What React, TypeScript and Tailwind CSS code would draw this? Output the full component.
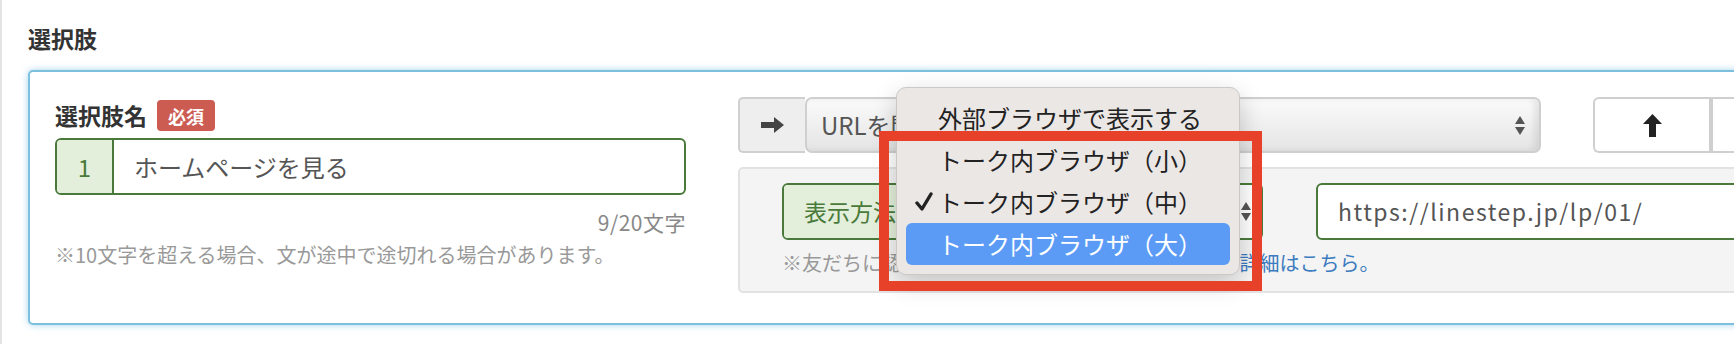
import React from "react";

const font = { fontFamily: '"Noto Sans CJK JP", "Noto Sans", sans-serif' };

const ArrowRight = () => (
  <svg width="23" height="16" viewBox="0 0 23 16" fill="#444">
    <path d="M0 5h13V0l10 8-10 8v-5H0z" />
  </svg>
);

const ArrowUp = () => (
  <svg width="19" height="23" viewBox="0 0 19 23" fill="#222">
    <path d="M9.5 0L19 10h-6v13H6V10H0z" />
  </svg>
);

const Updown = () => (
  <svg width="10" height="19" viewBox="0 0 10 19" fill="#555">
    <path d="M5 0l5 8H0z M0 11h10l-5 8z" />
  </svg>
);

const Check = () => (
  <svg width="18" height="20" viewBox="0 0 18 20" fill="none" stroke="#222" strokeWidth="3.4" strokeLinecap="round" strokeLinejoin="round">
    <path d="M2 11l5 6L16 2" />
  </svg>
);

const menuItems = [
  { label: "外部ブラウザで表示する" },
  { label: "トーク内ブラウザ（小）" },
  { label: "トーク内ブラウザ（中）", checked: true },
  { label: "トーク内ブラウザ（大）", active: true },
];

export default function App() {
  return (
    <div className="relative w-[1734px] h-[344px] overflow-hidden bg-white border-l-2 border-[#e3e3e3]" style={font}>
      <div className="pl-[26px] pt-[22px]">
        <h2 className="text-[23px] leading-[32px] font-bold text-[#333]">選択肢</h2>

        {/* card */}
        <div className="mt-[16px] w-[1800px] h-[255px] border-2 border-[#7cc0dd] rounded-[5px] bg-white shadow-[0_0_7px_rgba(110,185,225,0.6)] flex gap-[52px] pl-[25px] pt-[25px]">
          {/* left column */}
          <div className="w-[631px] shrink-0 mt-[3px]">
            <div className="flex items-center h-[31px] gap-[10px]">
              <span className="text-[23px] font-bold text-[#333] leading-none">選択肢名</span>
              <span className="h-[31px] px-[11px] flex items-center rounded-[4px] bg-[#cc5b52] text-white text-[18px] font-bold leading-none">必須</span>
            </div>
            <div className="mt-[7px] h-[57px] flex border-2 border-[#4a7a3b] rounded-[6px] overflow-hidden">
              <div className="w-[57px] flex items-center justify-center bg-[#e3efda] border-r-2 border-[#4a7a3b] text-[24px] text-[#4a7a3b]">1</div>
              <div className="flex-1 flex items-center pl-[20px] text-[24px] text-[#555]">ホームページを見る</div>
            </div>
            <div className="mt-[15px] text-right text-[21px] tracking-[0.5px] leading-[24px] text-[#888]">9/20文字</div>
            <div className="mt-[9px] text-[20px] leading-[24px] text-[#999]">※10文字を超える場合、文が途中で途切れる場合があります。</div>
          </div>

          {/* right column */}
          <div className="flex-1">
            <div className="flex h-[56px]">
              <div className="w-[67px] flex items-center justify-center bg-[#eeeeee] border-2 border-r-0 border-[#d0d0d0] rounded-l-[5px]">
                <ArrowRight />
              </div>
              <div className="w-[736px] flex items-center justify-between pl-[14px] pr-[14px] border-2 border-[#cfcfcf] rounded-[7px] bg-gradient-to-b from-[#fbfbfb] to-[#e4e4e4] shadow-[inset_-5px_0_6px_rgba(0,0,0,0.08)] text-[24px] text-[#555]">
                <span>URLを開く</span>
                <Updown />
              </div>
              <div className="ml-[52px] flex">
                <div className="w-[116px] flex items-center justify-center border-2 border-r-0 border-[#cfcfcf] rounded-l-[6px] bg-white">
                  <ArrowUp />
                </div>
                <div className="w-[116px] border-2 border-l-[4px] border-[#cfcfcf] bg-white" />
              </div>
            </div>

            <div className="mt-[14px] h-[126px] border-2 border-[#e2e2e2] rounded-[5px] bg-[#f4f4f4] pl-[42px] pt-[14px]">
              <div className="flex h-[57px]">
                <div className="w-[481px] flex border-2 border-[#4a7a3b] rounded-[6px] overflow-hidden bg-white">
                  <div className="w-[150px] flex items-center pl-[20px] bg-[#e3efda] border-r-2 border-[#4a7a3b] text-[23px] text-[#4a7a3b]">表示方法</div>
                  <div className="flex-1 flex items-center justify-between pl-[14px] pr-[10px] text-[23px] text-[#555]">
                    <span>トーク内ブラウザ（中）</span>
                    <Updown />
                  </div>
                </div>
                <div className="ml-[53px] w-[600px] flex items-center pl-[20px] border-2 border-[#4a7a3b] rounded-[6px] bg-white text-[23px] tracking-[1.5px] text-[#555]">
                  https://linestep.jp/lp/01/
                </div>
              </div>
              <div className="mt-[11px] text-[20px] leading-[24px] text-[#999]">
                ※友だちに認識されるブラウザの表示サイズです。<span className="text-[#3b7bbf]">詳細はこちら。</span>
              </div>
            </div>
          </div>
        </div>
      </div>

      {/* native popup menu */}
      <div className="absolute left-[894px] top-[87px] w-[344px] h-[188px] rounded-[10px] bg-[#ebe7e5] border border-[#cbc8c6] shadow-[0_8px_24px_rgba(0,0,0,0.2)] pt-[9px] px-[9px]">
        {menuItems.map((item) => (
          <div
            key={item.label}
            className={
              item.active
                ? "relative h-[42px] flex items-center pl-[32px] rounded-[6px] bg-[#5b9bf6] text-white text-[24px]"
                : "relative h-[42px] flex items-center pl-[32px] text-[#222] text-[24px]"
            }
          >
            {item.checked && (
              <span className="absolute left-[9px] top-[11px]">
                <Check />
              </span>
            )}
            {item.label}
          </div>
        ))}
      </div>

      {/* highlight annotation */}
      <div className="absolute left-[877px] top-[131px] w-[383px] h-[160px] border-[10px] border-[#e8412a]" />
    </div>
  );
}
